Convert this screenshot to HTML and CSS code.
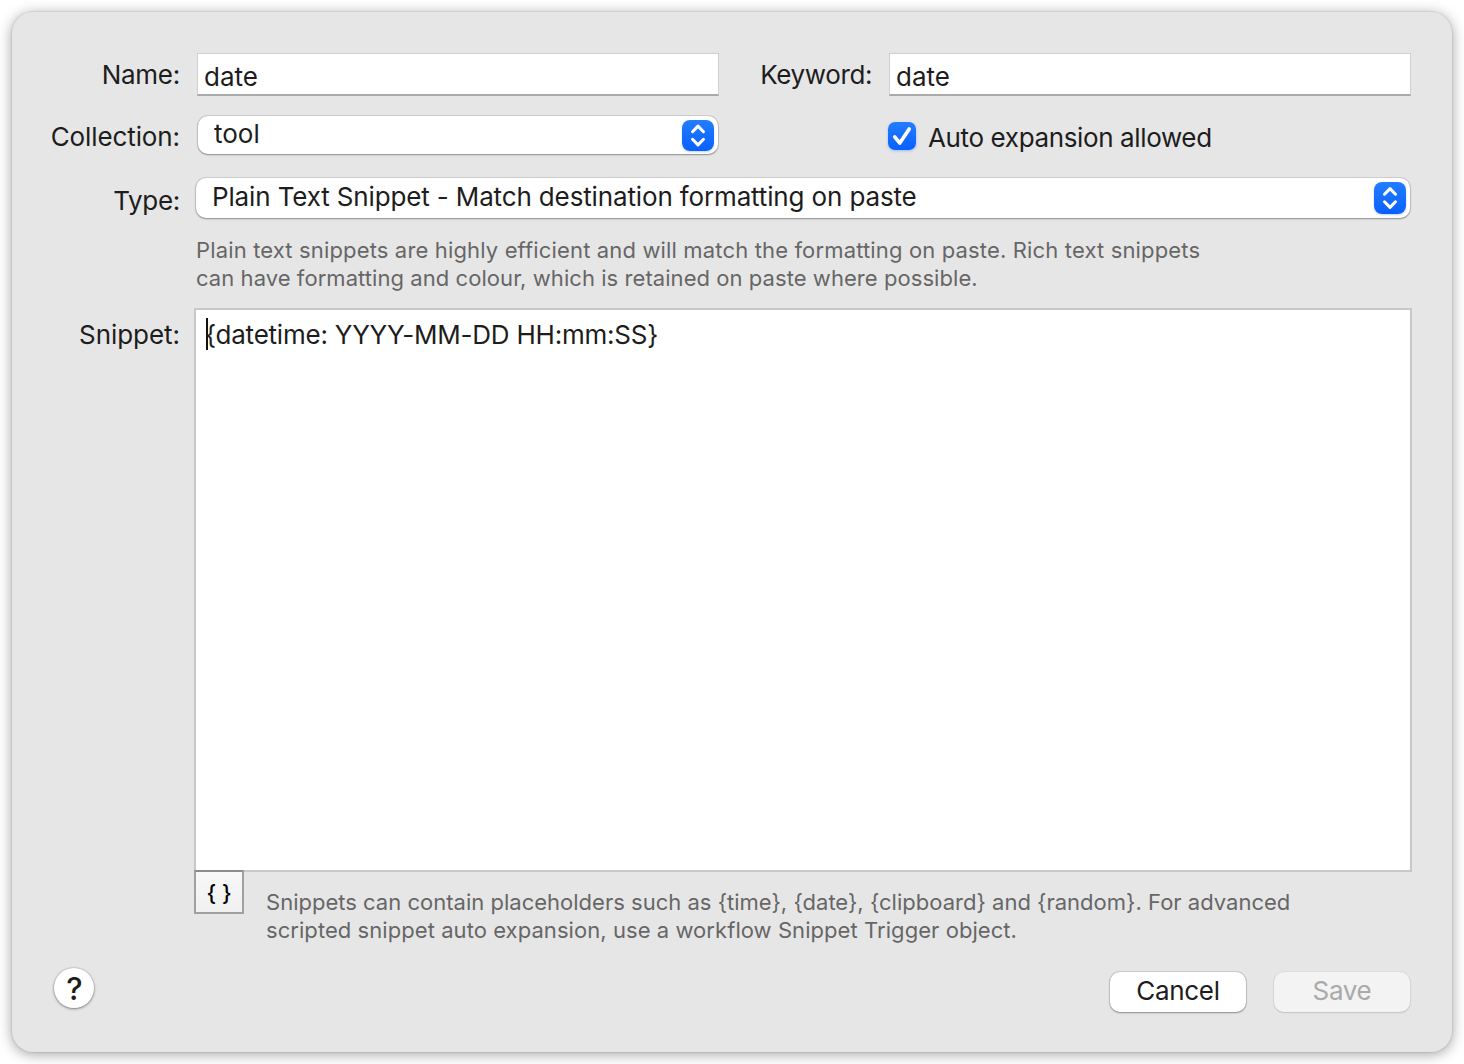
FILE: index.html
```html
<!DOCTYPE html>
<html lang="en">
<head>
<meta charset="utf-8">
<title>Edit Snippet</title>
<link rel="stylesheet" href="styles.css">
</head>
<body>
<main class="dialog">
  <div class="row row-name">
    <div class="label"><span class="t-name">Name:</span></div>
    <div class="input">date</div>
    <div class="label label-keyword"><span class="t-keyword">Keyword:</span></div>
    <div class="input">date</div>
  </div>
  <div class="row row-collection">
    <div class="label"><span class="t-collection">Collection:</span></div>
    <div class="select select-small"><span>tool</span>
      <svg class="stepper" width="32" height="31" viewBox="0 0 32 31"><path d="M10.5 11.7 16 6.1l5.5 5.6M10.5 19.3l5.5 5.6 5.5-5.6"/></svg>
    </div>
    <div class="check">
      <svg class="checkbox" width="28" height="28" viewBox="0 0 28 28"><path d="M6.7 14.8 11.8 21 21.2 7"/></svg>
      <span class="t-auto">Auto expansion allowed</span>
    </div>
  </div>
  <div class="row row-type">
    <div class="label"><span class="t-type">Type:</span></div>
    <div class="select select-large"><span class="t-plain">Plain Text Snippet - Match destination formatting on paste</span>
      <svg class="stepper" width="32" height="32" viewBox="0 0 32 32"><path d="M10.5 12.2 16 6.6l5.5 5.6M10.5 19.8l5.5 5.6 5.5-5.6"/></svg>
    </div>
  </div>
  <div class="hint hint-type"><span class="hint-wide">Plain text snippets are highly efficient and will match the formatting on paste. Rich text snippets</span><br><span class="hint-medium">can have formatting and colour, which is retained on paste where possible.</span></div>
  <div class="row row-snippet">
    <div class="label"><span class="t-snippet">Snippet:</span></div>
    <div class="editor"><i class="caret"></i><span class="t-code">{datetime: YYYY-MM-DD HH:mm:SS}</span></div>
  </div>
  <div class="row row-placeholder">
    <div class="braces">{ }</div>
    <div class="hint"><span class="hint-normal">Snippets can contain placeholders such as {time}, {date}, {clipboard} and {random}. For advanced</span><br><span class="hint-medium">scripted snippet auto expansion, use a workflow Snippet Trigger object.</span></div>
  </div>
  <footer class="footer">
    <div class="help">?</div>
    <div class="button"><span class="t-cancel">Cancel</span></div>
    <div class="button button-disabled"><span class="t-save">Save</span></div>
  </footer>
</main>
</body>
</html>
```
FILE: styles.css
```css
* { box-sizing: border-box; }
body {
  margin: 0;
  width: 1464px;
  height: 1064px;
  padding: 12px;
  overflow: hidden;
  background: #fff;
  color: #1d1d1d;
  font: 26px/32px Inter, "Liberation Sans", sans-serif;
  white-space: nowrap;
}
.dialog {
  width: 1440px;
  height: 1040px;
  padding-top: 41px;
  border-radius: 21px;
  background: #e6e6e6;
  box-shadow: 0 0 0 1px rgba(0,0,0,.06), 0 2px 14px rgba(0,0,0,.38);
}
.row { display: flex; align-items: flex-start; }
.label { width: 168px; margin-right: 17px; text-align: right; flex: none; }
.row-name { height: 62px; }
.row-name .label { padding-top: 6px; }
.label-keyword { width: 153px; }
.t-name { letter-spacing: -.25px; }
.t-collection { letter-spacing: -.1px; }
.t-keyword { letter-spacing: -.4px; }
.t-type { letter-spacing: -.3px; }
.t-snippet { letter-spacing: -.05px; }
.t-auto { letter-spacing: -.37px; }
.t-plain { letter-spacing: -.14px; }
.t-code { letter-spacing: -.23px; }
.t-cancel { letter-spacing: -.3px; }
.t-save { letter-spacing: -.3px; }
.hint-wide { letter-spacing: .15px; }
.hint-medium { letter-spacing: .06px; }
.hint-normal { letter-spacing: .01px; }
.input {
  width: 522px;
  height: 43px;
  padding: 7px 0 0 6px;
  border: 1px solid #d0d0d0;
  border-bottom: 2px solid #a9a9a9;
  background: #fff;
}
.row-collection { height: 62px; }
.row-collection .label { padding-top: 6px; }
.select {
  display: flex;
  justify-content: space-between;
  background: #fff;
  border-radius: 10px;
  box-shadow: 0 0 0 1px rgba(0,0,0,.1), 0 1px 2px rgba(0,0,0,.32);
}
.select-small { width: 520px; height: 38px; margin: 1px 0 0 1px; padding: 2px 4px 0 16px; }
.stepper {
  flex: none;
  margin-top: 2px;
  border-radius: 8px;
  background: linear-gradient(#237dff, #0a60ff);
  box-shadow: 0 1px 2px rgba(0,90,255,.25);
}
.select-large .stepper { margin-top: 1px; }
.stepper path, .checkbox path {
  fill: none;
  stroke: #fff;
  stroke-width: 3;
  stroke-linecap: round;
  stroke-linejoin: round;
}
.check { display: flex; margin-left: 170px; padding-top: 7px; }
.checkbox {
  border-radius: 7px;
  margin-right: 12px;
  background: linear-gradient(#237dff, #0a60ff);
  box-shadow: 0 1px 3px rgba(0,90,255,.3);
}
.checkbox path { stroke-width: 3.6; }
.row-type { height: 59px; }
.row-type .label { padding-top: 8px; margin-right: 16px; }
.select-large { width: 1214px; height: 40px; margin-top: 1px; padding: 3px 4px 0 16px; }
.hint { color: #666; font-size: 22px; line-height: 28px; }
.hint-type { height: 72px; padding-left: 184px; }
.row-snippet { height: 562px; }
.row-snippet .label { padding-top: 11px; margin-right: 14px; }
.editor {
  display: flex;
  width: 1218px;
  height: 564px;
  padding: 9px 0 0 10px;
  border: 2px solid #c8c8c8;
  background: #fff;
}
.caret { width: 2px; height: 32px; margin: -1px -2px 0 0; background: #111; }
.t-code { margin-left: -1px; }
.row-placeholder { padding-left: 182px; height: 97px; }
.braces {
  position: relative;
  width: 50px;
  height: 44px;
  margin-right: 22px;
  border: 2px solid #a0a0a0;
  border-top-color: #8c8c8c;
  background: linear-gradient(#f8f8f8, #f0f0f0);
  color: #000;
  font-size: 22px;
  font-weight: 500;
  line-height: 42px;
  text-align: center;
}
.row-placeholder .hint { padding-top: 18px; }
.footer { display: flex; padding: 0 42px; }
.help {
  width: 40px;
  height: 40px;
  margin: 1px auto 0 0;
  border-radius: 50%;
  background: #fff;
  box-shadow: 0 0 0 1px rgba(0,0,0,.08), 0 1px 3px rgba(0,0,0,.4);
  font-size: 31px;
  font-weight: 500;
  line-height: 41px;
  text-align: center;
  text-indent: 1px;
}
.button {
  width: 136px;
  height: 40px;
  margin: 5px 0 0 28px;
  border-radius: 10px;
  background: #fff;
  box-shadow: 0 0 0 1px rgba(0,0,0,.1), 0 1px 2px rgba(0,0,0,.32);
  line-height: 38px;
  text-align: center;
}
.button-disabled {
  background: #f3f3f3;
  color: #aaa;
  box-shadow: 0 0 0 1px rgba(0,0,0,.04), 0 1px 2px rgba(0,0,0,.12);
}
```
